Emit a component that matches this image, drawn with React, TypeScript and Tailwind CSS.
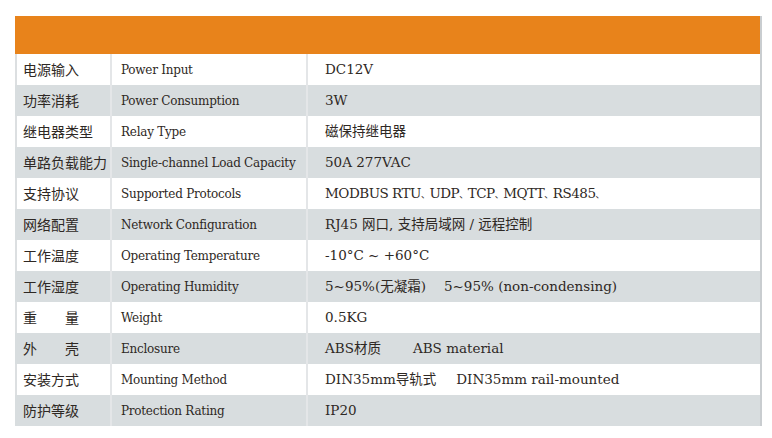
import React from 'react';

const dun = <span className="text-[9px]">、</span>;

const rows: [string, string, React.ReactNode][] = [
  ['电源输入', 'Power Input', 'DC12V'],
  ['功率消耗', 'Power Consumption', '3W'],
  ['继电器类型', 'Relay Type', '磁保持继电器'],
  ['单路负载能力', 'Single-channel Load Capacity', '50A 277VAC'],
  ['支持协议', 'Supported Protocols', <span className="tracking-[-0.5px]">MODBUS RTU{dun}UDP{dun}TCP{dun}MQTT{dun}RS485{dun}</span>],
  ['网络配置', 'Network Configuration', 'RJ45 网口, 支持局域网 / 远程控制'],
  ['工作温度', 'Operating Temperature', '-10°C ~ +60°C'],
  ['工作湿度', 'Operating Humidity', <>5~95%(无凝霜)<span className="ml-[18px]">5~95% (non-condensing)</span></>],
  ['重　　量', 'Weight', '0.5KG'],
  ['外　　壳', 'Enclosure', <>ABS材质<span className="ml-[32px]">ABS material</span></>],
  ['安装方式', 'Mounting Method', <>DIN35mm导轨式<span className="ml-[20px]">DIN35mm rail-mounted</span></>],
  ['防护等级', 'Protection Rating', 'IP20'],
];

export default function App() {
  return (
    <div className="w-[772px] h-[438px] bg-white pt-4 pl-[15px] text-[#2e2824]">
      <div className="w-[747px] border-r-2 border-[#c9cdd0]">
        <div className="h-[38px] bg-[#e8831b]" />
        {rows.map(([zh, en, val], i) => (
          <div
            key={i}
            className={`flex h-[31px] items-center ${i % 2 === 1 ? 'bg-[#d8dddf]' : 'bg-white border-l-2 border-[#dcdfe1]'}`}
          >
            <div className={`h-full flex items-center ${i % 2 === 1 ? 'w-[95px] pl-2' : 'w-[93px] pl-[6px]'} text-[14px] font-['Noto_Sans_CJK_SC',sans-serif] whitespace-pre`}>
              {zh}
            </div>
            <div className="h-full w-[196px] flex items-center pl-[9px] border-l-2 border-[#e4e6e8] text-[12px] tracking-[-0.25px] font-['DejaVu_Serif','Noto_Sans_CJK_SC',serif]">
              {en}
            </div>
            <div className="h-full flex-1 flex items-center pl-[17px] border-l-2 border-[#e4e6e8] text-[13.5px] font-['DejaVu_Serif','Noto_Sans_CJK_SC',serif]">
              <span>{val}</span>
            </div>
          </div>
        ))}
      </div>
    </div>
  );
}
